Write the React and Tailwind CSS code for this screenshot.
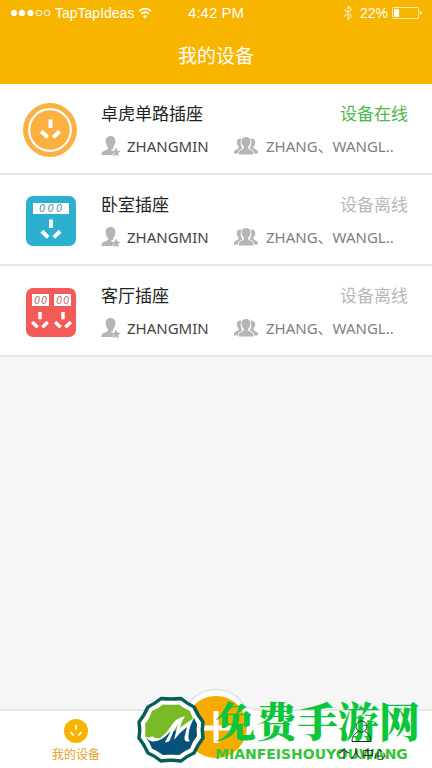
import { Bluetooth } from 'lucide-react';

const devices = [
  { id: 1, name: '卓虎单路插座', owner: 'ZHANGMIN', members: 'ZHANG、WANGL..', online: true, Icon: RoundSocket },
  { id: 2, name: '卧室插座', owner: 'ZHANGMIN', members: 'ZHANG、WANGL..', online: false, Icon: SingleSocket },
  { id: 3, name: '客厅插座', owner: 'ZHANGMIN', members: 'ZHANG、WANGL..', online: false, Icon: DoubleSocket },
];

// Three pin holes of a wall socket, centred on 0,0
function Pins({ transform }) {
  return (
    <g transform={transform} stroke="#fff" strokeWidth="4" fill="none">
      <path d="M0 -10.500v8.500M-9.200 1.200l6.400 6.200M9.200 1.200l-6.400 6.200" />
    </g>
  );
}

function RoundSocket() {
  return (
    <svg viewBox="0 0 54 54" className="h-[54px] w-[54px]" aria-hidden="true">
      <circle cx="27" cy="27" r="27" fill="#fbb040" />
      <circle cx="27" cy="27" r="20.8" fill="none" stroke="#fff" strokeWidth="2.2" />
      <Pins transform="translate(27.500 27)" />
    </svg>
  );
}

function SingleSocket() {
  return (
    <svg viewBox="0 0 54 54" className="h-[54px] w-[54px]" aria-hidden="true">
      <rect x="3" y="2" width="50" height="50" rx="7" fill="#2bb0cf" />
      <rect x="10" y="9" width="36" height="11" fill="#fff" />
      <g fontFamily="Liberation Sans, sans-serif" fontStyle="italic" fontSize="10" fill="#3a8ca0" textAnchor="middle">
        <text x="19" y="18">0</text>
        <text x="27.500" y="18">0</text>
        <text x="36" y="18">0</text>
      </g>
      <Pins transform="translate(28 36)" />
    </svg>
  );
}

function DoubleSocket() {
  return (
    <svg viewBox="0 0 54 54" className="h-[54px] w-[54px]" aria-hidden="true">
      <rect x="3" y="3" width="50" height="49" rx="7" fill="#f45b58" />
      <rect x="9" y="9" width="17" height="12" fill="#fff" />
      <rect x="31" y="9" width="17" height="12" fill="#fff" />
      <g fontFamily="Liberation Sans, sans-serif" fontStyle="italic" fontSize="10" fill="#b9605c" textAnchor="middle">
        <text x="14" y="18.500">0</text>
        <text x="21" y="18.500">0</text>
        <text x="36" y="18.500">0</text>
        <text x="43" y="18.500">0</text>
      </g>
      <Pins transform="translate(17 36) scale(.85)" />
      <Pins transform="translate(40 36) scale(.85)" />
    </svg>
  );
}

function OwnerIcon() {
  return (
    <svg viewBox="0 0 20 20" className="h-5 w-5" fill="#b5b5b5" aria-hidden="true">
      <path d="M9.500 0C6.300 0 4.500 2.300 4.600 5.200c0 2.600 1 4.500 2.400 5.700v2c-.4 1-6.500 1.700-6.500 4.700V19h11.300l.3-3-2.200-2.600 2.500-.5c-.4-.3-.5-1.400-.3-2 1.300-1.200 2.300-3.100 2.300-5.700C14.500 2.200 12.700 0 9.500 0z" />
      <path d="M15 11.500l1.400 2.900 3.100.5-2.200 2.200.5 3.100-2.800-1.500-2.800 1.500.5-3.100-2.200-2.200 3.100-.5z" />
    </svg>
  );
}

function MembersIcon() {
  return (
    <svg viewBox="0 0 24 20" className="h-5 w-6" fill="#b5b5b5" aria-hidden="true">
      <path d="M12 1C9 1 7.400 3.100 7.500 5.600c.1 2.400 1 4 2.300 5v2C9.400 13.600 4.700 14.200 4.700 17v1.500h14.600V17c0-2.800-4.700-3.400-5.100-4.400v-2c1.300-1 2.200-2.600 2.300-5C16.600 3.100 15 1 12 1z" />
      <path d="M7.400 2.600C4.400 2.300 2.700 4 2.800 6.300c0 1.900.7 3.200 1.800 4.100V12C4.200 13 0 13.500 0 16v1.500h3.900c0-3 2.200-3.700 4.600-4.900C7 10.500 5.800 6.500 7.400 2.600zM16.600 2.600c3-.3 4.700 1.400 4.600 3.700 0 1.900-.7 3.200-1.800 4.100V12c.4 1 4.600 1.500 4.600 4v1.500h-3.900c0-3-2.200-3.700-4.600-4.900 1.500-2.100 2.700-6.100 1.100-10z" />
    </svg>
  );
}

function StatusBar() {
  return (
    <div className="grid h-[26px] grid-cols-[1fr_auto_1fr] items-center px-[10px] font-['Liberation_Sans',Arial,sans-serif] text-sm">
      <div className="flex items-center gap-1">
        <svg viewBox="0 0 41 8" className="h-2 w-[41px]" fill="#fff" stroke="#fff" aria-hidden="true">
          <circle cx="4" cy="4" r="2.800" />
          <circle cx="12" cy="4" r="2.800" />
          <circle cx="20.500" cy="4" r="2.800" />
          <circle cx="29" cy="4" r="2.800" fill="none" />
          <circle cx="37" cy="4" r="2.800" fill="none" />
        </svg>
        <span>TapTapIdeas</span>
        <svg viewBox="0 0 14 12" className="h-3 w-[14px]" fill="none" stroke="#fff" strokeWidth="1.800" aria-hidden="true">
          <path d="M1 4.200a8.500 8.500 0 0 1 12 0M3.200 6.800a5.400 5.400 0 0 1 7.600 0" />
          <path d="M7 11.500L4.900 9.200a3 3 0 0 1 4.200 0z" fill="#fff" stroke="none" />
        </svg>
      </div>
      <span className="text-[15px]">4:42 PM</span>
      <div className="flex items-center justify-end gap-1">
        <Bluetooth className="h-4 w-4 text-white/60" strokeWidth={2} />
        <span>22%</span>
        <svg viewBox="0 0 30 12" className="h-3 w-[30px]" aria-hidden="true">
          <rect x=".5" y=".5" width="26" height="11" rx="1" fill="none" stroke="#fff" strokeOpacity=".7" />
          <rect x="2" y="2" width="5" height="8" fill="#fff" />
          <path d="M28 4v4c2-.5 2-3.500 0-4z" fill="#fff" fillOpacity=".8" />
        </svg>
      </div>
    </div>
  );
}

function DeviceRow({ device }) {
  const { name, owner, members, online, Icon } = device;

  return (
    <li className="flex items-center gap-6 border-b-2 border-[#e6e6e6] bg-white pt-[18px] pr-6 pb-[15px] pl-[23px]">
      <Icon />
      <div className="min-w-0 flex-1 space-y-2">
        <div className="flex items-center justify-between text-[17px] leading-6">
          <h2 className="text-[#222]">{name}</h2>
          <span className={online ? 'text-[#4cb848]' : 'text-[#b8b8b8]'}>{online ? '设备在线' : '设备离线'}</span>
        </div>
        <div className="flex items-center text-[15px] leading-6">
          <div className="flex w-[133px] items-center gap-[6px] text-[#444]">
            <OwnerIcon />
            <span>{owner}</span>
          </div>
          <div className="flex items-center gap-2 whitespace-nowrap text-[#808080]">
            <MembersIcon />
            <span>{members}</span>
          </div>
        </div>
      </div>
    </li>
  );
}

function TabBar() {
  return (
    <nav className="relative flex h-[59px] justify-between border-t-2 border-[#e6e6e6] bg-white px-[46px] text-xs">
      <a href="#devices" className="flex w-[60px] flex-col items-center gap-[2px] pt-2 text-[#dfa21c]">
        <svg viewBox="0 0 24 24" className="h-6 w-6" aria-hidden="true">
          <circle cx="12" cy="12" r="12" fill="#f7b500" />
          <path d="M12 6v4.500M6.500 13l3 3.500M17.500 13l-3 3.500" stroke="#fff" strokeWidth="1.800" />
        </svg>
        <span className="leading-5">我的设备</span>
      </a>
      <button type="button" aria-label="添加设备" className="absolute bottom-0 left-1/2 -translate-x-1/2">
        <svg viewBox="0 0 92 80" className="h-20 w-[92px]">
          <path d="M0 22C14 22 17 18 22 12C34-2 58-2 70 12C75 18 78 22 92 22V80H0z" fill="#fff" />
          <path d="M0 22C14 22 17 18 22 12C34-2 58-2 70 12C75 18 78 22 92 22" fill="none" stroke="#e2e2e2" strokeWidth="1.500" />
          <circle cx="46" cy="39" r="31" fill="#f7ab00" />
          <path d="M46 23v32M30 40h32" stroke="#fff" strokeWidth="5" />
        </svg>
      </button>
      <a href="#profile" className="relative z-20 flex w-[48px] flex-col items-center gap-[2px] pt-2 text-[#222]">
        <svg viewBox="0 0 24 24" className="h-6 w-6" fill="none" stroke="#222" aria-hidden="true">
          <circle cx="11.500" cy="7.500" r="5.500" />
          <path d="M8 12.500C4 15 2 18 2 22.500h19c0-4.500-2-7.500-6-10" />
        </svg>
        <span className="leading-5">个人中心</span>
      </a>
      <SiteMark />
    </nav>
  );
}

function SiteMark() {
  return (
    <div className="pointer-events-none absolute right-3 bottom-1 z-10 flex items-center gap-[10px] whitespace-nowrap">
      <svg viewBox="0 0 68 68" className="h-[68px] w-[68px]" aria-hidden="true">
        <path d="M24 2.500Q34 3.500 44 2.500Q50 7.500 57 11Q60.500 19 66 26Q64.500 34 66 42Q60.500 49 57 57Q50 60 44 65Q34 63.500 24 65Q18 60 11 57Q7.500 49 2 42Q3.500 34 2 26Q7.500 19 11 11Q18 7.500 24 2.500z" fill="#fff" stroke="#075d57" strokeWidth="3.500" strokeLinejoin="round" />
        <path d="M26 8.500Q34 9 42 8.500Q47 12.500 53 15Q55 22 60 28Q59 34 60 40Q55 46 53 52.500Q47 55 42 59Q34 58 26 59Q21 55 15 52.500Q13 46 8 40Q9 34 8 28Q13 22 15 15Q21 12.500 26 8.500z" fill="#79ba27" />
        <path d="M10 43Q22 45 32 36L42 34L57 22L60 28Q59 34 60 40Q55 46 53 52.500Q47 55 42 59Q34 58 26 59Q21 55 15 52.500Q13.500 47 10 43z" fill="#07527a" />
        <path d="M9 40Q12 43 15 40Q18 43 23 42Q30 37 34 30Q39 22 48 20Q44 26 43 32Q49 27 57 22Q52 31 51.500 39Q51 44 53 45Q47 47 47.500 41L50 31Q43 36 37 44L41 28Q36 35 33 44Q31 47 28 46L34 35Q24 46 16 45.500Q11 45 9 40z" fill="#fff" />
      </svg>
      <div className="font-bold">
        <div className="font-['Noto_Serif_CJK_SC','Noto_Sans_CJK_SC',serif] text-[41px] leading-[48px] font-black text-[#0bc53b]">免费手游网</div>
        <div className="font-['DejaVu_Sans',sans-serif] text-[14px] leading-5 text-[#35c535]">MIANFEISHOUYOUWANG</div>
      </div>
    </div>
  );
}

export default function App() {
  return (
    <div className="flex min-h-screen flex-col bg-[#f6f6f6] font-['Noto_Sans','Noto_Sans_CJK_SC',sans-serif]">
      <header className="bg-[#f7b500] text-white">
        <StatusBar />
        <h1 className="pt-4 pb-[14px] text-center text-[19px] leading-7">我的设备</h1>
      </header>
      <main className="flex-1">
        <ul>
          {devices.map((device) => (
            <DeviceRow key={device.id} device={device} />
          ))}
        </ul>
      </main>
      <TabBar />
    </div>
  );
}
